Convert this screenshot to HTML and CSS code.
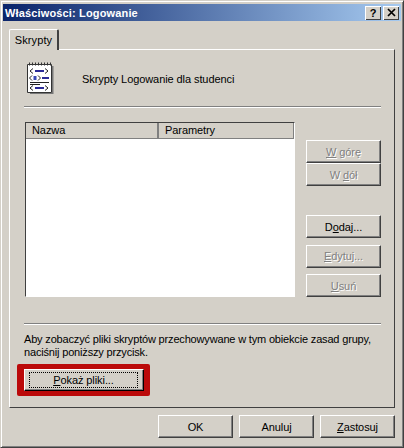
FILE: index.html
```html
<!DOCTYPE html>
<html lang="pl">
<head>
  <meta charset="UTF-8">
  <title>Właściwości: Logowanie</title>
  <link rel="stylesheet" href="styles.css">
</head>
<body>
  <div class="window">
    <div class="titlebar">
      <span class="title">Właściwości: Logowanie</span>
      <span class="caption-btn help">?</span>
      <span class="caption-btn">
        <svg width="9" height="9" viewBox="0 0 9 9"><path d="M1 1l7 7M8 1L1 8" stroke="#000" stroke-width="1.7" fill="none"/></svg>
      </span>
    </div>

    <div class="tabs">
      <div class="tab">Skrypty</div>
    </div>

    <div class="page">
      <div class="heading">
        <svg class="script-icon" width="28" height="33" viewBox="0 0 28 33">
          <path d="M1.500 2.500h24v28h-24z" fill="#fff" stroke="#333"/>
          <path d="M26 4h1.500v28H4v-1h22z" fill="#777"/>
          <path d="M3.500 0.500v3M6.500 0.500v3M9.500 0.500v3M12.500 0.500v3M15.500 0.500v3M18.500 0.500v3M21.500 0.500v3M24.500 0.500v3" stroke="#333"/>
          <path d="M7 6.500l-3 2.500 3 2.500M19 6.500l3 2.500-3 2.500M6 13.500l-2.500 2.500L6 18.500M12 13.500l2.500 2.500-2.500 2.500M7 23.500l-3 2.500 3 2.500M19 23.500l3 2.500-3 2.500" stroke="#222" fill="none"/>
          <path d="M9 8h9v2H9zM16 15h7v2h-7zM9 25h9v2H9z" fill="#2a2a96"/>
          <path d="M7.500 14h3v4h-3z" fill="#3a4ab8"/>
          <path d="M4 20.500h19M4 22.500h10" stroke="#222"/>
        </svg>
        <span>Skrypty Logowanie dla studenci</span>
      </div>
      <div class="rule"></div>

      <div class="middle">
        <div class="list">
          <div class="list-head">
            <div class="col col-name">Nazwa</div>
            <div class="col col-params">Parametry</div>
          </div>
        </div>
        <div class="side">
          <div class="side-group">
            <button class="btn off"><u>W</u> górę</button>
            <button class="btn off">W <u>d</u>ół</button>
          </div>
          <div class="side-group spaced">
            <button class="btn">D<u>o</u>daj...</button>
            <button class="btn off"><u>E</u>dytuj...</button>
            <button class="btn off"><u>U</u>suń</button>
          </div>
        </div>
      </div>

      <div class="rule"></div>
      <p class="note">Aby zobaczyć pliki skryptów przechowywane w tym obiekcie zasad grupy,<br>naciśnij poniższy przycisk.</p>
      <div class="highlight">
        <button class="btn show-files"><span class="focus"><u>P</u>okaż pliki...</span></button>
      </div>
    </div>

    <div class="footer">
      <button class="btn">OK</button>
      <button class="btn">Anuluj</button>
      <button class="btn"><u>Z</u>astosuj</button>
    </div>
  </div>
</body>
</html>
```

FILE: styles.css
```css
* { box-sizing: border-box; margin: 0; padding: 0; }

body {
  width: 404px;
  height: 448px;
  overflow: hidden;
  background: #d4d0c8;
  font-family: Tahoma, 'Liberation Sans', Arial, sans-serif;
  font-size: 11px;
  letter-spacing: -0.08px;
  color: #000;
}

.window {
  width: 404px;
  height: 448px;
  padding: 3px 2px;
  background: #d4d0c8;
  border: 1px solid;
  border-color: #d4d0c8 #404040 #404040 #d4d0c8;
  box-shadow: inset 1px 1px 0 #fff, inset -1px -1px 0 #808080;
}

.titlebar {
  display: flex;
  align-items: center;
  height: 17px;
  padding: 0 2px;
  background: linear-gradient(90deg, #0a246a, #a6caf0);
  color: #fff;
}

.title {
  flex: 1;
  font-weight: bold;
  letter-spacing: 0.15px;
}

.caption-btn {
  display: flex;
  align-items: center;
  justify-content: center;
  width: 16px;
  height: 14px;
  background: #d4d0c8;
  color: #000;
  font-weight: bold;
  font-size: 11px;
  box-shadow: inset 1px 1px 0 #fff, inset -1px -1px 0 #404040;
}

.help { margin-right: 2px; }

.tabs {
  display: flex;
  margin-top: 8px;
  padding-left: 6px;
  height: 21px;
}

.tab {
  width: 50px;
  height: 21px;
  padding-top: 4px;
  text-align: center;
  position: relative;
  z-index: 1;
  background: #d4d0c8;
  border-top: 1px solid #fff;
  border-left: 1px solid #fff;
  border-right: 2px solid #404040;
  border-radius: 2px 2px 0 0;
  letter-spacing: 0.1px;
}

.page {
  height: 359px;
  margin: -1px 6px 0 6px;
  padding: 12px 13px 0 14px;
  border: 1px solid;
  border-color: #fff #404040 #404040 #fff;
}

.heading {
  display: flex;
  align-items: center;
  gap: 28px;
  height: 33px;
  padding-left: 2px;
}

.rule {
  height: 2px;
  margin-top: 11px;
  background: #808080;
  border-bottom: 1px solid #fff;
}

.middle {
  display: flex;
  justify-content: space-between;
  margin-top: 14px;
}

.list {
  width: 270px;
  height: 175px;
  margin-left: 1px;
  background: #fff;
  border: 1px solid;
  border-color: #404040 #fff #fff #404040;
}

.list-head {
  display: flex;
  height: 16px;
  background: #d4d0c8;
  border-bottom: 1px solid #808080;
}

.col {
  padding-left: 6px;
  line-height: 15px;
}

.col-name {
  width: 133px;
  border-right: 1px solid #808080;
  box-shadow: inset -1px 0 0 #808080;
}

.col-params { flex: 1; border-right: 1px solid #808080; }

.side {
  width: 75px;
  padding-top: 18px;
}

.side-group { display: flex; flex-direction: column; }

.side-group.spaced { gap: 6.5px; margin-top: 29px; }

.btn {
  display: block;
  width: 75px;
  height: 23px;
  background: #d4d0c8;
  border: 1px solid;
  border-color: #fff #404040 #404040 #fff;
  box-shadow: inset -1px -1px 0 #808080;
  font: inherit;
  letter-spacing: inherit;
  color: #000;
}

.btn.off {
  color: #808080;
  text-shadow: 1px 1px 0 #fff;
}

.middle + .rule { margin-top: 26px; }

.note {
  margin-top: 8px;
  line-height: 13px;
  letter-spacing: -0.17px;
  white-space: nowrap;
}

.highlight {
  width: 133px;
  height: 32px;
  margin: 5px 0 0 -7px;
  padding: 5px 6px 5px 7px;
  background: #bb0a0a;
  border-radius: 2px;
}

.show-files {
  width: 120px;
  height: 22px;
  padding: 2px;
  border-color: #fff #000 #000 #fff;
}

.focus {
  display: block;
  height: 16px;
  margin-left: 2px;
  margin-right: 3px;
  line-height: 14px;
  border: 1px dotted #000;
}

.footer {
  display: flex;
  justify-content: flex-end;
  gap: 6px;
  margin-top: 7px;
  padding-right: 6px;
}
```
